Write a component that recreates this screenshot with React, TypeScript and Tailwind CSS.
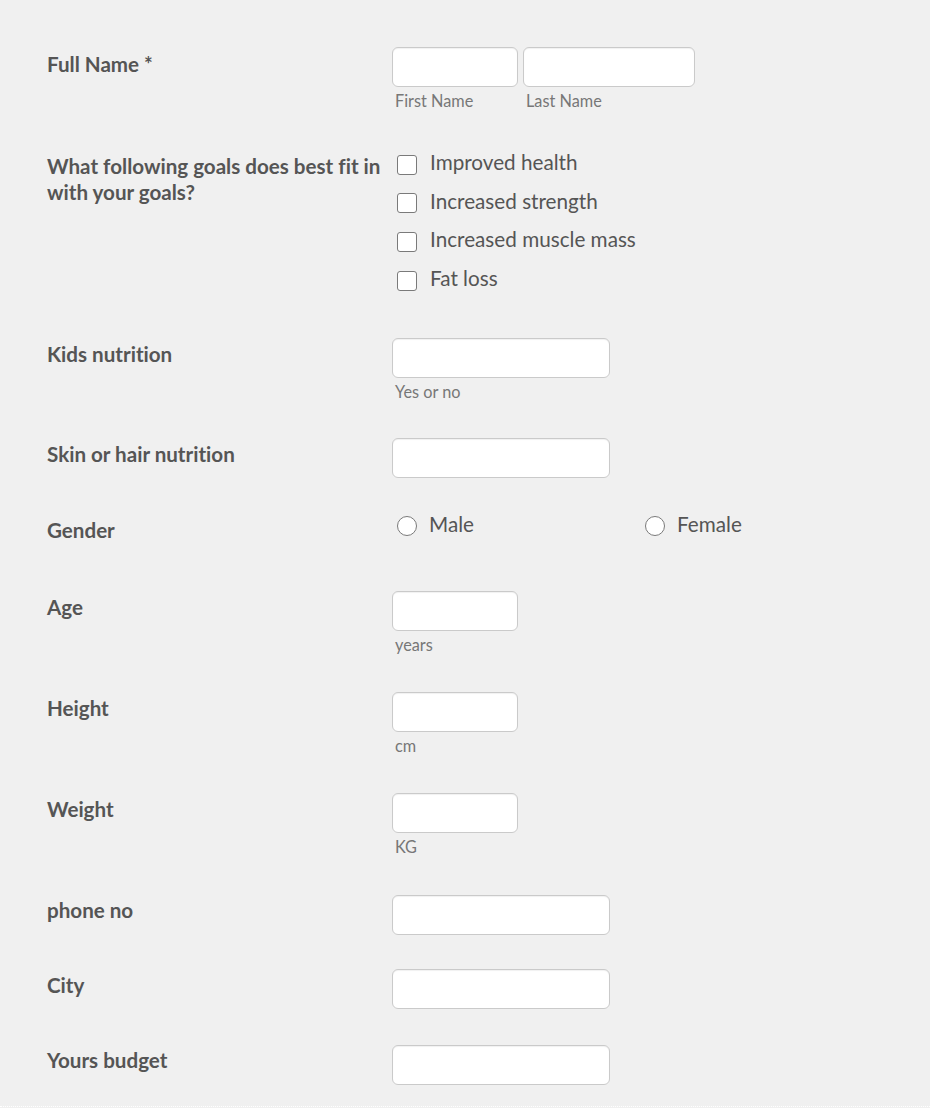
import React from "react";

const font = { fontFamily: "Lato, 'Open Sans', sans-serif" };

function Label({ children, mt = "mt-[5px]" }: { children: React.ReactNode; mt?: string }) {
  return (
    <div className={`w-[345px] shrink-0 pr-[3px] text-[20.6px] font-bold leading-[26px] text-[#555555] [font-variant-ligatures:none] ${mt}`}>
      {children}
    </div>
  );
}

function Input({ w }: { w: string }) {
  return (
    <div
      className={`${w} h-[40px] rounded-[6px] border border-[#cacaca] bg-white shadow-[inset_0_1px_1px_rgba(0,0,0,0.06)]`}
    />
  );
}

function Sub({ children }: { children: React.ReactNode }) {
  return <div className="mt-[5px] pl-[3px] text-[16.3px] leading-[18px] text-[#777777]">{children}</div>;
}

function Row({ h, children }: { h: string; children: React.ReactNode }) {
  return <div className={`flex items-start ${h}`}>{children}</div>;
}

function Check({ label }: { label: string }) {
  return (
    <div className="flex h-[38.6px] items-center">
      <div className="ml-[5px] mt-[5px] h-[20px] w-[20px] rounded-[3px] border border-[#7a7a7a] bg-white" />
      <span className="ml-[13px] text-[20.7px] leading-[24px] text-[#555555]">{label}</span>
    </div>
  );
}

function Radio({ label }: { label: string }) {
  return (
    <div className="flex w-[248px] items-center">
      <div className="ml-[5px] mt-[5px] h-[20px] w-[20px] rounded-full border border-[#7a7a7a] bg-white" />
      <span className="ml-[12px] text-[20.7px] leading-[24px] text-[#555555]">{label}</span>
    </div>
  );
}

export default function App() {
  return (
    <div className="min-h-[1108px] w-[930px] bg-[#f0f0f0]" style={font}>
      <div className="border-b border-dotted border-white pl-[47px] pt-[47px] pb-[23px]">
        <Row h="h-[96px]">
          <Label mt="mt-[4px]">Full Name *</Label>
          <div className="flex gap-[5px]">
            <div>
              <Input w="w-[126px]" />
              <Sub>First Name</Sub>
            </div>
            <div>
              <Input w="w-[172px]" />
              <Sub>Last Name</Sub>
            </div>
          </div>
        </Row>
        <Row h="h-[195px]">
          <Label mt="mt-[10px]">
            What following goals does best fit in with your goals?
          </Label>
          <div>
            <Check label="Improved health" />
            <Check label="Increased strength" />
            <Check label="Increased muscle mass" />
            <Check label="Fat loss" />
          </div>
        </Row>
        <Row h="h-[100px]">
          <Label mt="mt-[3px]">Kids nutrition</Label>
          <div>
            <Input w="w-[218px]" />
            <Sub>Yes or no</Sub>
          </div>
        </Row>
        <Row h="h-[81px]">
          <Label mt="mt-[3px]">Skin or hair nutrition</Label>
          <Input w="w-[218px]" />
        </Row>
        <Row h="h-[72px]">
          <Label mt="mt-[-2px]">Gender</Label>
          <div className="-mt-[8px] flex">
            <Radio label="Male" />
            <Radio label="Female" />
          </div>
        </Row>
        <Row h="h-[101px]">
          <Label mt="mt-[3px]">Age</Label>
          <div>
            <Input w="w-[126px]" />
            <Sub>years</Sub>
          </div>
        </Row>
        <Row h="h-[101px]">
          <Label mt="mt-[3px]">Height</Label>
          <div>
            <Input w="w-[126px]" />
            <Sub>cm</Sub>
          </div>
        </Row>
        <Row h="h-[102px]">
          <Label mt="mt-[3px]">Weight</Label>
          <div>
            <Input w="w-[126px]" />
            <Sub>KG</Sub>
          </div>
        </Row>
        <Row h="h-[74px]">
          <Label mt="mt-[2px]">phone no</Label>
          <Input w="w-[218px]" />
        </Row>
        <Row h="h-[76px]">
          <Label mt="mt-[3px]">City</Label>
          <Input w="w-[218px]" />
        </Row>
        <Row h="h-[38px]">
          <Label mt="mt-[2px]">Yours budget</Label>
          <Input w="w-[218px]" />
        </Row>
      </div>
    </div>
  );
}
